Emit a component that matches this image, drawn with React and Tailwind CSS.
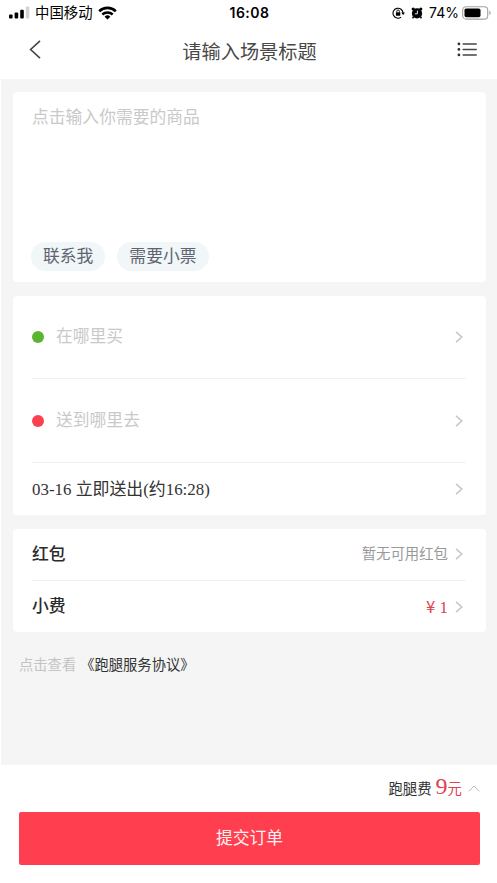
import { useState } from 'react';

const tags = ['联系我', '需要小票'];

function Chevron() {
  return (
    <svg
      className="w-2 h-3 shrink-0"
      viewBox="0 0 8 12"
      fill="none"
      stroke="#c8c8c8"
      strokeWidth="1.6"
    >
      <path d="M1 0.8l5.8 5.2L1 11.2" />
    </svg>
  );
}

function StatusBar() {
  return (
    <div className="grid grid-cols-[1fr_auto_1fr] items-center h-[25px] pl-[9px] pr-[5px] text-black">
      <div className="flex items-center">
        <svg className="w-[21px] h-[13px]" viewBox="0 0 21 13">
          <rect x="0" y="8.5" width="3.6" height="4" rx="1" />
          <rect x="5.6" y="6.5" width="3.6" height="6" rx="1" />
          <rect x="11.2" y="3.8" width="3.6" height="8.7" rx="1" />
          <rect x="16.8" y="0.5" width="3.6" height="12" rx="1" fill="#d4d4d4" />
        </svg>
        <span className="ml-[5px] text-[14.4px] leading-5">中国移动</span>
        <svg className="ml-[5px] w-[19px] h-[14px]" viewBox="0 0 19 14" fill="none" stroke="#000">
          <path d="M1.2 5.2a12 12 0 0 1 16.6 0" strokeWidth="2.6" />
          <path d="M4.3 8.5a7.6 7.6 0 0 1 10.4 0" strokeWidth="2.4" />
          <path d="M9.5 13.6L6.6 10.7a4.2 4.2 0 0 1 5.8 0z" fill="#000" stroke="none" />
        </svg>
      </div>

      <span className="mr-[2px] font-['Inter','Noto_Sans_CJK_SC',sans-serif] font-semibold text-[14px] leading-5 tracking-[0.45px]">
        16:08
      </span>

      <div className="flex items-center justify-end">
        {/* Rotation lock */}
        <svg className="w-[13px] h-[12px]" viewBox="0 0 13 12" fill="none" stroke="#000">
          <path d="M9 10.2A5 5 0 1 1 11 6" strokeWidth="1.1" />
          <path d="M9.2 5.4h3.8L11.1 8z" fill="#000" stroke="none" />
          <rect x="3.9" y="5.3" width="4.4" height="3.4" rx="0.4" fill="#000" stroke="none" />
          <path d="M4.8 5.4V4.3a1.3 1.3 0 0 1 2.6 0v1.1" strokeWidth="0.9" />
        </svg>
        {/* Alarm */}
        <svg className="ml-[6px] w-[12px] h-[12px]" viewBox="0 0 12 12">
          <circle cx="6" cy="6.4" r="5.1" />
          <circle cx="2.2" cy="2" r="1.6" />
          <circle cx="9.8" cy="2" r="1.6" />
          <path d="M2.6 9.5L1.6 11.4M9.4 9.5l1 1.9" stroke="#000" strokeWidth="1.5" />
          <path d="M6.4 3.6v3.2H3.9" fill="none" stroke="#fff" strokeWidth="0.9" />
        </svg>
        <span className="ml-[6px] font-['Inter','Noto_Sans_CJK_SC',sans-serif] text-[14px] leading-5">
          74%
        </span>
        <svg className="ml-[3px] w-[30px] h-[14px]" viewBox="0 0 30 14">
          <rect x="0.7" y="0.7" width="25" height="12.4" rx="3.4" fill="none" stroke="#a3a3a3" strokeWidth="1.1" />
          <rect x="2.5" y="2.5" width="16" height="8.8" rx="1.8" />
          <path d="M27.3 4.8c1.8.5 1.8 3.7 0 4.2z" fill="#a3a3a3" />
        </svg>
      </div>
    </div>
  );
}

function NavBar() {
  return (
    <header className="flex items-center justify-between h-[54px] pl-[29px] pr-[20px] pb-[3px]">
      <button className="pb-[3px]">
        <svg className="w-3 h-[19px]" viewBox="0 0 12 19" fill="none" stroke="#444" strokeWidth="1.6">
          <path d="M11 0.8L1.6 9.5 11 18.2" />
        </svg>
      </button>
      <h1 className="pt-[4px] pl-[1px] text-[19.2px] leading-6 text-[#484848]">请输入场景标题</h1>
      <button className="pb-[2px]">
        <svg className="w-5 h-[15px]" viewBox="0 0 20 15" fill="#333">
          <circle cx="1.9" cy="1.9" r="1.4" />
          <circle cx="1.9" cy="7.4" r="1.4" />
          <circle cx="1.9" cy="12.9" r="1.4" />
          <path d="M6.2 1.9h13M6.2 7.4h13M6.2 12.9h13" stroke="#444" strokeWidth="1.5" strokeLinecap="round" />
        </svg>
      </button>
    </header>
  );
}

function AddressRow({ color, label }) {
  return (
    <div className="flex items-center h-[84px] pr-[3px] border-b border-[#f0f0f0] first:h-[83px]">
      <span className={`w-3 h-3 rounded-full ${color}`} />
      <span className="flex-1 ml-3 text-[16.8px] leading-6 text-[#c9c9c9]">{label}</span>
      <Chevron />
    </div>
  );
}

export default function App() {
  const [note, setNote] = useState('');

  return (
    <div className="flex flex-col h-[883px] bg-white font-['Liberation_Sans','Noto_Sans_CJK_SC',sans-serif]">
      <StatusBar />
      <NavBar />

      <main className="flex-1 ml-[1px] pl-3 pr-[11px] pt-[13px] bg-[#f5f5f5]">
        {/* Goods */}
        <section className="flex flex-col justify-between h-[190px] pl-[19px] pr-5 pt-[14px] pb-[11px] bg-white rounded-[4px]">
          <textarea
            value={note}
            onChange={(e) => setNote(e.target.value)}
            placeholder="点击输入你需要的商品"
            className="h-[120px] resize-none outline-none text-[16.8px] leading-6 text-[#333] placeholder:text-[#c9c9c9]"
          />
          <div className="flex gap-3 -ml-[1px]">
            {tags.map((tag) => (
              <button
                key={tag}
                className="h-[29px] px-[12px] rounded-full bg-[#f1f6f8] text-[16.8px] leading-[29px] text-[#5e6470]"
              >
                {tag}
              </button>
            ))}
          </div>
        </section>

        {/* Addresses and time */}
        <section className="mt-[14px] h-[219px] pl-[19px] pr-5 bg-white rounded-[4px]">
          <AddressRow color="bg-[#5cb531]" label="在哪里买" />
          <AddressRow color="bg-[#fb4052]" label="送到哪里去" />
          <div className="flex items-center justify-between h-[52px] pr-[3px]">
            <span className="pt-[1px] font-['Liberation_Serif','Noto_Sans_CJK_SC',serif] text-[16.9px] leading-6 text-[#333]">
              03-16 立即送出(约16:28)
            </span>
            <Chevron />
          </div>
        </section>

        {/* Coupon and tip */}
        <section className="mt-[14px] h-[103px] pl-[19px] pr-5 bg-white rounded-[4px]">
          <div className="flex items-center h-[52px] pr-[3px] pb-[1px] border-b border-[#f0f0f0]">
            <span className="flex-1 pt-[1px] text-[16.8px] leading-6 font-medium text-[#2b2b2b]">红包</span>
            <span className="mr-[7px] text-[14.4px] leading-5 text-[#999]">暂无可用红包</span>
            <Chevron />
          </div>
          <div className="flex items-center h-[51px] pr-[3px]">
            <span className="flex-1 text-[16.8px] leading-6 font-medium text-[#2b2b2b]">小费</span>
            <span className="mr-[7px] font-['Liberation_Serif','Noto_Sans_CJK_SC',serif] text-[16.8px] leading-6 text-[#dc4355]">
              <span className="font-['Noto_Sans_CJK_SC',sans-serif]">¥</span> 1
            </span>
            <Chevron />
          </div>
        </section>

        <p className="mt-[23px] pl-[6px] text-[14.3px] leading-5 text-[#c4c4c4]">
          点击查看
          <span className="ml-1 text-[#333]">《跑腿服务协议》</span>
        </p>
      </main>

      <footer className="h-[118px] pl-[19px] pr-[17px]">
        <div className="flex items-baseline justify-end h-[47px] pt-[5px]">
          <span className="text-[14.4px] text-[#333]">跑腿费</span>
          <span className="ml-1 font-['Liberation_Serif','Noto_Sans_CJK_SC',serif] text-[24px] leading-8 text-[#e04255]">
            9<span className="text-[14.4px]">元</span>
          </span>
          <svg className="ml-[6px] w-3 h-[7px] self-start mt-[15px]" viewBox="0 0 12 7" fill="none" stroke="#bbb">
            <path d="M0.8 6.4L6 1l5.2 5.4" />
          </svg>
        </div>
        <button className="block w-[461px] h-[53px] rounded-[2px] bg-[#ff3f50] text-[16.8px] leading-6 pt-[1px] text-[#fff0f1]">
          提交订单
        </button>
      </footer>
    </div>
  );
}
